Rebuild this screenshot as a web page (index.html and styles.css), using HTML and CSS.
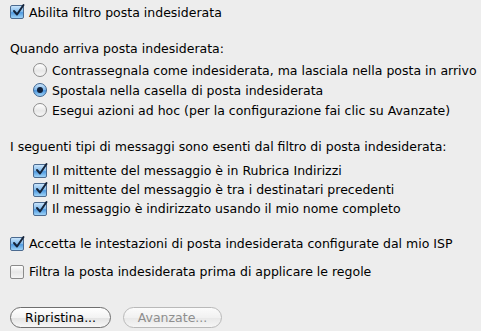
FILE: index.html
```html
<!DOCTYPE html>
<html lang="it">
<head>
    <meta charset="UTF-8">
    <title>Posta indesiderata</title>
    <link rel="stylesheet" href="styles.css">
</head>
<body>
<div class="pane">
    <div class="row row-top">
        <span class="check on"><svg viewBox="0 0 14 14"><path d="M3 7.5 L6 11 L12.5 1.5"/></svg></span>
        <span>Abilita filtro posta indesiderata</span>
    </div>

    <div class="label">Quando arriva posta indesiderata:</div>
    <div class="group group-radio">
        <div class="row"><span class="radio"></span><span>Contrassegnala come indesiderata, ma lasciala nella posta in arrivo</span></div>
        <div class="row"><span class="radio on"></span><span>Spostala nella casella di posta indesiderata</span></div>
        <div class="row"><span class="radio"></span><span>Esegui azioni ad hoc (per la configurazione fai clic su Avanzate)</span></div>
    </div>

    <div class="label label-exempt">I seguenti tipi di messaggi sono esenti dal filtro di posta indesiderata:</div>
    <div class="group group-check">
        <div class="row"><span class="check on"><svg viewBox="0 0 14 14"><path d="M3 7.5 L6 11 L12.5 1.5"/></svg></span><span>Il mittente del messaggio è in Rubrica Indirizzi</span></div>
        <div class="row"><span class="check on"><svg viewBox="0 0 14 14"><path d="M3 7.5 L6 11 L12.5 1.5"/></svg></span><span>Il mittente del messaggio è tra i destinatari precedenti</span></div>
        <div class="row"><span class="check on"><svg viewBox="0 0 14 14"><path d="M3 7.5 L6 11 L12.5 1.5"/></svg></span><span>Il messaggio è indirizzato usando il mio nome completo</span></div>
    </div>

    <div class="row row-isp">
        <span class="check on"><svg viewBox="0 0 14 14"><path d="M3 7.5 L6 11 L12.5 1.5"/></svg></span>
        <span>Accetta le intestazioni di posta indesiderata configurate dal mio ISP</span>
    </div>
    <div class="row row-rules">
        <span class="check"></span>
        <span>Filtra la posta indesiderata prima di applicare le regole</span>
    </div>

    <div class="buttons">
        <button class="btn">Ripristina...</button>
        <button class="btn btn-off">Avanzate...</button>
    </div>
</div>
</body>
</html>
```

FILE: styles.css
```css
* {
    margin: 0;
    padding: 0;
    box-sizing: border-box;
}

html,
body {
    width: 100%;
    height: 100%;
    background-color: #ededed;
}

body {
    font: 12.5px "Lucida Grande", "DejaVu Sans", sans-serif;
    color: #000;
}

.pane {
    padding: 3px 0 0 10px;
}

.row {
    display: flex;
    align-items: center;
    height: 19px;
    white-space: nowrap;
}

.row-top {
    height: 18px;
}

.row .check,
.row .radio {
    margin-right: 5px;
    flex: none;
}

.label {
    height: 19px;
    line-height: 19px;
    margin-top: 18px;
}

.label-exempt {
    margin-top: 17px;
}

.group {
    padding-left: 23px;
}

.group-radio {
    margin-top: 2px;
}

.group-radio .row {
    height: 20px;
}

.group-check {
    margin-top: 5px;
}

.row-isp {
    margin-top: 16px;
}

.row-rules {
    margin-top: 9px;
}

/* checkbox */
.check {
    width: 14px;
    height: 14px;
    border: 1px solid #8a8a8a;
    border-radius: 2px;
    background: linear-gradient(#ffffff, #e6e6e6 50%, #f4f4f4);
    position: relative;
}

.check.on {
    border-color: #4b6a8f;
    background: linear-gradient(#c9e4fb, #7eb8ea 50%, #4f9ae0 55%, #9fd3f7);
}

.check svg {
    position: absolute;
    left: 0;
    top: -3px;
    width: 14px;
    height: 15px;
    fill: none;
    stroke: #15243a;
    stroke-width: 2;
    stroke-linecap: round;
    stroke-linejoin: round;
}

/* radio */
.radio {
    width: 14px;
    height: 14px;
    border: 1px solid #8d8d8d;
    border-radius: 50%;
    background: linear-gradient(#ffffff, #e8e8e8 55%, #f6f6f6);
    position: relative;
}

.radio.on {
    border-color: #3f6590;
    background: linear-gradient(#cbe5fb, #7cb6ea 50%, #4d97df 55%, #a2d4f7);
}

.radio.on::after {
    content: "";
    position: absolute;
    left: 3px;
    top: 3px;
    width: 6px;
    height: 6px;
    border-radius: 50%;
    background-color: #10203a;
}

/* buttons */
.buttons {
    display: flex;
    gap: 12px;
    margin-top: 26px;
}

.btn {
    width: 101px;
    height: 21px;
    border: 1px solid #6f6f6f;
    border-radius: 11px;
    background: linear-gradient(#ffffff, #f3f3f3 50%, #e4e4e4 55%, #f7f7f7);
    font: 12.5px "Lucida Grande", "DejaVu Sans", sans-serif;
    color: #000;
}

.btn-off {
    width: 99px;
    border-color: #b9b9b9;
    color: #8e8e8e;
    background: linear-gradient(#fbfbfb, #f1f1f1 50%, #e9e9e9 55%, #f5f5f5);
}
```
